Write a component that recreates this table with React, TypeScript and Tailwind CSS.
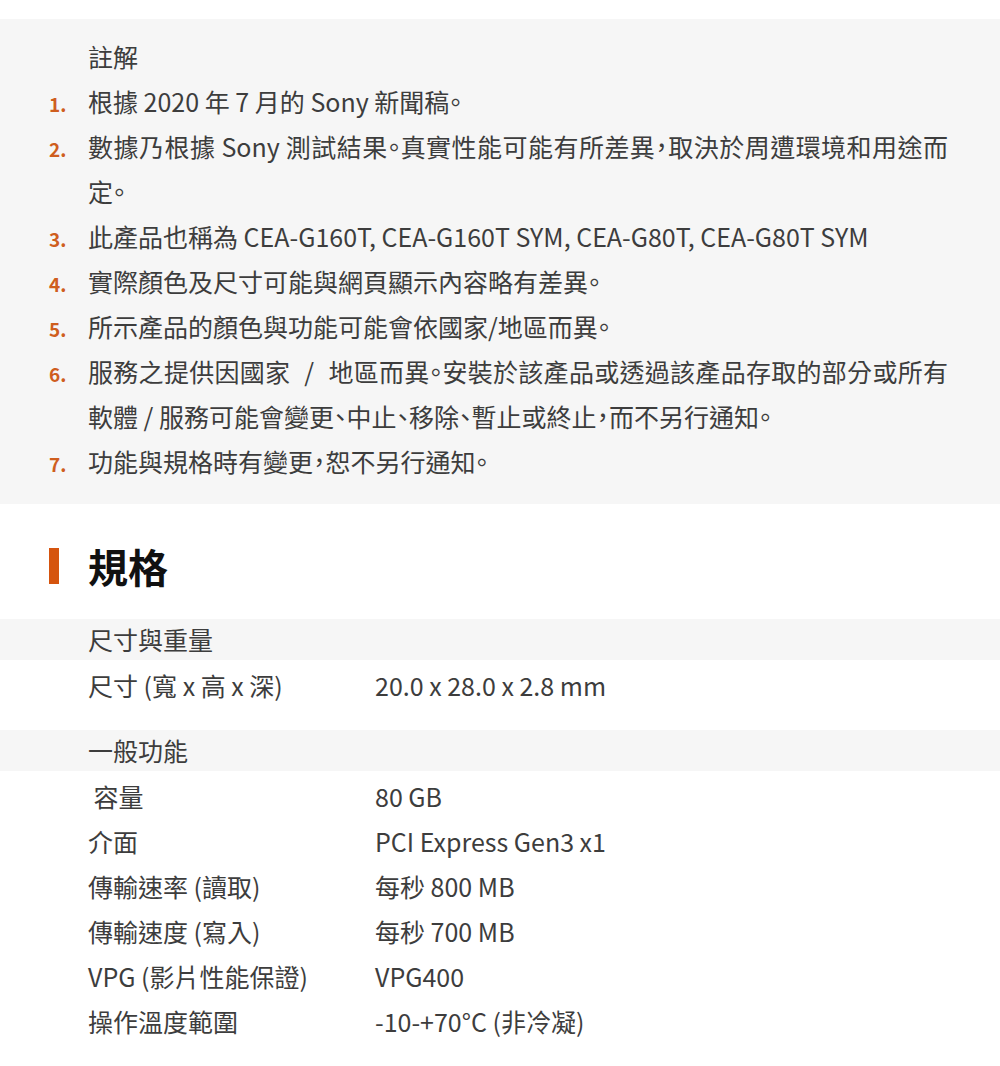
import React from "react";

type Note = {
	lines: Array<React.ReactNode>;
};

const notes: Array<Note> = [
	{ lines: ["根據 2020 年 7 月的 Sony 新聞稿。"] },
	{
		lines: [
			"數據乃根據 Sony 測試結果。真實性能可能有所差異，取決於周遭環境和用途而",
			"定。",
		],
	},
	{ lines: ["此產品也稱為 CEA-G160T, CEA-G160T SYM, CEA-G80T, CEA-G80T SYM"] },
	{ lines: ["實際顏色及尺寸可能與網頁顯示內容略有差異。"] },
	{ lines: ["所示產品的顏色與功能可能會依國家/地區而異。"] },
	{
		lines: [
			<>
				服務之提供因國家<span className="px-[14px]">/</span>
				地區而異。安裝於該產品或透過該產品存取的部分或所有
			</>,
			"軟體 / 服務可能會變更、中止、移除、暫止或終止，而不另行通知。",
		],
	},
	{ lines: ["功能與規格時有變更，恕不另行通知。"] },
];

type Spec = { label: string; value: string };

const specGroups: Array<{ title: string; rows: Array<Spec> }> = [
	{
		title: "尺寸與重量",
		rows: [{ label: "尺寸 (寬 x 高 x 深)", value: "20.0 x 28.0 x 2.8 mm" }],
	},
	{
		title: "一般功能",
		rows: [
			{ label: "\u00a0容量", value: "80 GB" },
			{ label: "介面", value: "PCI Express Gen3 x1" },
			{ label: "傳輸速率 (讀取)", value: "每秒 800 MB" },
			{ label: "傳輸速度 (寫入)", value: "每秒 700 MB" },
			{ label: "VPG (影片性能保證)", value: "VPG400" },
			{ label: "操作溫度範圍", value: "-10-+70°C (非冷凝)" },
		],
	},
];

const App = () => {
	return (
		<div className="w-[1000px] bg-white pt-[19px] text-[25px] text-[#3d3d3d] [font-family:'Noto_Sans_CJK_TC',sans-serif] [font-feature-settings:'halt']">
			{/* notes */}
			<section className="bg-[#f6f6f6] pt-[15px] pb-[20px]">
				<div className="pl-[88px] leading-[45px]">註解</div>
				<ol className="pl-[49px] pr-[52px]">
					{notes.map((note, i) => (
						<li className="flex items-baseline leading-[45px]" key={i}>
							<span className="w-[39px] shrink-0 text-[19px] font-bold leading-none text-[#cf5e1e]">
								{i + 1}.
							</span>
							<div className="flex-1">
								{note.lines.map((line, j) => (
									<span
										key={j}
										className={
											j < note.lines.length - 1
												? "block text-justify [text-align-last:justify]"
												: "block"
										}
									>
										{line}
									</span>
								))}
							</div>
						</li>
					))}
				</ol>
			</section>

			{/* heading */}
			<div className="flex h-[115px] items-center gap-[29px] pl-[49px] pt-[9px]">
				<span className="h-[36px] w-[10px] bg-[#d5540e]" />
				<h2 className="text-[40px] font-bold leading-none text-[#111]">規格</h2>
			</div>

			{/* specs */}
			{specGroups.map((group) => (
				<div className="pb-[22px]" key={group.title}>
					<div className="h-[41px] bg-[#f6f6f6] pl-[88px] leading-[41px]">
						{group.title}
					</div>
					<div className="pt-[3px]">
						{group.rows.map((row) => (
							<div
								className="grid grid-cols-[287px_1fr] pl-[88px] leading-[45px]"
								key={row.label}
							>
								<span className="whitespace-pre">{row.label}</span>
								<span>{row.value}</span>
							</div>
						))}
					</div>
				</div>
			))}
		</div>
	);
};

export default App;
